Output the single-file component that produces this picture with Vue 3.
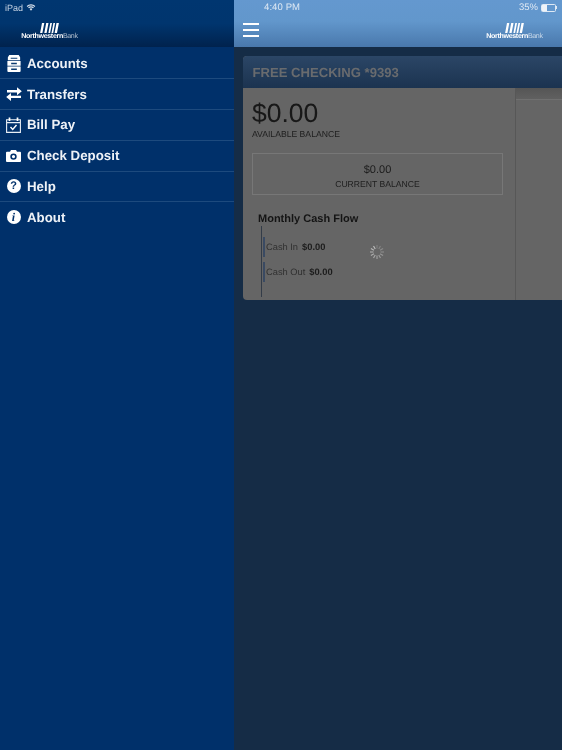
<script setup>
const menu = [
  { label: 'Accounts', icon: 'accounts' },
  { label: 'Transfers', icon: 'transfers' },
  { label: 'Bill Pay', icon: 'bill' },
  { label: 'Check Deposit', icon: 'camera' },
  { label: 'Help', icon: 'help' },
  { label: 'About', icon: 'about' }
]
const spokes = Array.from({ length: 12 }, (_, i) => i * 30)
</script>

<template>
  <div class="page">
    <aside class="sidebar">
      <header class="side-head">
        <div class="status">
          <span>iPad</span>
          <svg class="wifi" width="10" height="7" viewBox="0 0 12 9">
            <path d="M1 3.2a7 7 0 0 1 10 0M2.800 5a4.400 4.400 0 0 1 6.400 0" fill="none" stroke="#dbe4ee" stroke-width="1.500"/>
            <path d="M4.200 6.400a2.500 2.500 0 0 1 3.600 0L6 8.600z" fill="#dbe4ee"/>
          </svg>
        </div>
        <div class="logo side-logo">
          <svg width="19" height="10" viewBox="0 0 19 10">
            <path d="M2 0h2.300L2.400 10H.1zM6.200 0h2.300L6.600 10H4.300zM10.300 0h1.700l-1.900 10H8.400zM13.400 0h1.700L13.200 10h-1.700zM16.500 0h2.400l-1.900 10h-2.400z" fill="#fff"/>
          </svg>
          <div class="wordmark"><b>Northwestern</b><span>Bank</span></div>
        </div>
      </header>
      <nav class="menu">
        <a v-for="item in menu" :key="item.label" class="menu-row">
          <span class="icon">
            <svg v-if="item.icon === 'accounts'" width="14" height="17" viewBox="0 0 14 18">
              <path d="M2 0h10l1.500 2.500V5.500H.5V2.500zM0 6.300h14v5.200H0zM0 12.300h14V17a1 1 0 0 1-1 1H1a1 1 0 0 1-1-1z" fill="#fff"/>
              <path d="M3.500 2.800h7v1.200h-7zM4 8.200h6v1.500H4zM4 14.300h6v1.500H4z" fill="#0b3a70"/>
            </svg>
            <svg v-else-if="item.icon === 'transfers'" width="16" height="14" viewBox="0 0 16 14">
              <path d="M1 3h10V.2L15.800 4.200 11 8.200V5.400H1zM15 8.700H5V6L.2 10 5 14v-2.900h10z" fill="#fff"/>
            </svg>
            <svg v-else-if="item.icon === 'bill'" width="15" height="16" viewBox="0 0 15 16">
              <path d="M.6 2.800h13.800v12.600H.6zM.6 5.600h13.800" fill="none" stroke="#e8eef5" stroke-width="1.100"/>
              <path d="M3.500.4v3.600M11.500.4v3.600" stroke="#fff" stroke-width="1.700"/>
              <path d="M4.500 10l2.200 2.400 3.800-4.400" fill="none" stroke="#fff" stroke-width="1.400"/>
            </svg>
            <svg v-else-if="item.icon === 'camera'" width="15" height="12" viewBox="0 0 15 12">
              <path fill-rule="evenodd" d="M1 1.800h3L5 0h5l1 1.800h3a1 1 0 0 1 1 1V11a1 1 0 0 1-1 1H1a1 1 0 0 1-1-1V2.800a1 1 0 0 1 1-1zM7.500 3.400a3.200 3.200 0 1 0 0 6.400 3.200 3.200 0 0 0 0-6.400zM7.500 5a1.600 1.600 0 1 1 0 3.200A1.600 1.600 0 0 1 7.500 5z" fill="#fff"/>
            </svg>
            <span v-else-if="item.icon === 'help'" class="round">?</span>
            <span v-else class="round info">i</span>
          </span>
          <span class="menu-label">{{ item.label }}</span>
        </a>
      </nav>
    </aside>

    <main class="main">
      <header class="main-head">
        <div class="status main-status">
          <span class="time">4:40 PM</span>
          <span class="battery-wrap">
            <span>35%</span>
            <span class="battery"><i></i></span>
            <span class="nub"></span>
          </span>
        </div>
        <div class="bar">
          <div class="burger"><i></i><i></i><i></i></div>
          <div class="logo">
            <svg width="19" height="10" viewBox="0 0 19 10">
              <path d="M2 0h2.300L2.400 10H.1zM6.200 0h2.300L6.600 10H4.300zM10.300 0h1.700l-1.900 10H8.400zM13.400 0h1.700L13.200 10h-1.700zM16.500 0h2.400l-1.900 10h-2.400z" fill="#fff"/>
            </svg>
            <div class="wordmark"><b>Northwestern</b><span>Bank</span></div>
          </div>
        </div>
      </header>

      <section class="card">
        <h2 class="card-title">FREE CHECKING *9393</h2>
        <div class="card-body">
          <div class="panel">
            <div class="big">$0.00</div>
            <div class="caption">AVAILABLE BALANCE</div>
            <div class="current">
              <div class="current-value">$0.00</div>
              <div class="caption">CURRENT BALANCE</div>
            </div>
            <h3 class="flow-title">Monthly Cash Flow</h3>
            <div class="flow">
              <div class="flow-row"><span class="tick"></span><span class="flow-name">Cash In</span><b>$0.00</b></div>
              <div class="flow-row"><span class="tick"></span><span class="flow-name">Cash Out</span><b>$0.00</b></div>
            </div>
            <svg class="spinner" width="16" height="16" viewBox="0 0 16 16">
              <line v-for="(a, i) in spokes" :key="a" x1="8" y1="1" x2="8" y2="4.500" :stroke-opacity="0.25 + i * 0.055" :transform="`rotate(${a} 8 8)`" stroke="#ccc" stroke-width="1.200"/>
            </svg>
          </div>
          <div class="side-panel"><div class="side-panel-head"></div></div>
        </div>
      </section>
    </main>
  </div>
</template>

<style>
html, body { margin: 0; background: #152c46; }
</style>

<style scoped>
.page {
  display: flex;
  width: 562px;
  height: 750px;
  overflow: hidden;
  font-family: "Liberation Sans", Arial, sans-serif;
  text-rendering: geometricPrecision;
  filter: blur(0.3px);
}
.sidebar {
  width: 234px;
  flex: none;
  background: #00306a;
}
.side-head {
  height: 47px;
  box-sizing: border-box;
  background: linear-gradient(#003670, #00356e 50%, #00224d);
}
.status {
  display: flex;
  align-items: center;
  height: 15px;
  padding-left: 5px;
  font-size: 9px;
  color: #c4d2e2;
}
.wifi { margin-left: 3px; margin-top: -1px; }
.logo {
  display: flex;
  flex-direction: column;
  align-items: center;
  width: 55px;
}
.side-logo { margin: 8px 0 0 22px; }
.wordmark {
  display: flex;
  font-size: 7.100px;
  line-height: 7px;
  letter-spacing: -0.35px;
  color: #fff;
  white-space: nowrap;
}
.wordmark span { font-weight: 400; opacity: 0.65; }
.menu { padding-top: 1.400px; }
.menu-row {
  display: flex;
  align-items: center;
  height: 29.800px;
  border-bottom: 1px solid #1d4a7e;
  color: #fff;
}
.menu-row:last-child { border-bottom: 0; }
.icon {
  width: 27px;
  flex: none;
  display: flex;
  justify-content: center;
}
.menu-label {
  font-size: 13.300px;
  font-weight: 700;
  color: #eef2f7;
}
.round {
  width: 14px;
  height: 14px;
  border-radius: 50%;
  background: #fff;
  color: #00306a;
  font-size: 11px;
  line-height: 14px;
  font-weight: 700;
  text-align: center;
}
.info { font-family: "Liberation Serif", serif; font-style: italic; font-size: 12px; }
.main {
  flex: 1;
  min-width: 0;
  background: #152c46;
}
.main-head {
  height: 47px;
  background: linear-gradient(#6498cf, #6297cc 45%, #4978ac);
}
.main-status {
  padding: 0 5px 0 30px;
  justify-content: space-between;
  color: #dfe9f4;
}
.time { letter-spacing: 0.1px; font-size: 9.500px; }
.battery-wrap { display: flex; align-items: center; font-size: 9.500px; }
.battery {
  width: 13px;
  height: 6px;
  border: 1px solid #dfe9f4;
  border-radius: 1.500px;
  display: block;
  margin-left: 3px;
}
.battery i {
  display: block;
  width: 5px;
  height: 6px;
  background: #eef3f9;
}
.nub {
  width: 1px;
  height: 3px;
  background: #dfe9f4;
}
.bar {
  display: flex;
  justify-content: space-between;
  align-items: flex-start;
  padding: 8px 20px 0 9px;
}
.burger i {
  display: block;
  width: 16px;
  height: 2px;
  background: #fff;
  margin-bottom: 4px;
}
.card {
  margin: 9px 0 0 9px;
  height: 244px;
  border-radius: 4px 0 0 4px;
  overflow: hidden;
  background: #656565;
}
.card-title {
  margin: 0;
  height: 32px;
  padding-left: 9.500px;
  font-size: 13.100px;
  line-height: 33px;
  font-weight: 700;
  color: #696b6e;
  background: linear-gradient(#2b4666, #1b3350);
}
.card-body {
  display: flex;
  height: 212px;
}
.panel {
  width: 272px;
  flex: none;
  box-sizing: border-box;
  padding: 10px 12px 0 9px;
  position: relative;
  color: #222;
}
.big {
  font-size: 26.500px;
  line-height: 30px;
  color: #181818;
}
.caption {
  font-size: 8.650px;
  line-height: 11px;
  margin-top: 1px;
  color: #202020;
}
.current {
  margin-top: 13px;
  height: 42px;
  box-sizing: border-box;
  border: 1px solid #777;
  text-align: center;
  padding-top: 10px;
}
.current-value {
  font-size: 11px;
  line-height: 13px;
  color: #1c1c1c;
}
.current .caption { margin-top: 2px; }
.flow-title {
  margin: 0;
  padding: 17px 0 0 6px;
  font-size: 11px;
  line-height: 14px;
  font-weight: 700;
  color: #141414;
}
.flow {
  margin: 0 0 0 9px;
  padding: 11px 0 10px 1px;
  border-left: 1px solid #333c48;
  display: flex;
  flex-direction: column;
  gap: 5px;
  width: 160px;
  height: 71px;
  box-sizing: border-box;
}
.flow-row {
  display: flex;
  align-items: center;
  height: 20px;
  font-size: 9.300px;
  color: #303030;
  position: relative;
}
.flow-row b { color: #1c1c1c; margin-left: 4px; }
.tick {
  width: 1.500px;
  height: 20px;
  background: #3a4a62;
  margin-right: 1.500px;
}
.spinner {
  position: absolute;
  left: 126px;
  top: 156px;
}
.side-panel {
  flex: 1;
  border-left: 1px solid #575757;
}
.side-panel-head {
  height: 11px;
  background: linear-gradient(#555, #606060);
  border-bottom: 1px solid #707070;
}
</style>
